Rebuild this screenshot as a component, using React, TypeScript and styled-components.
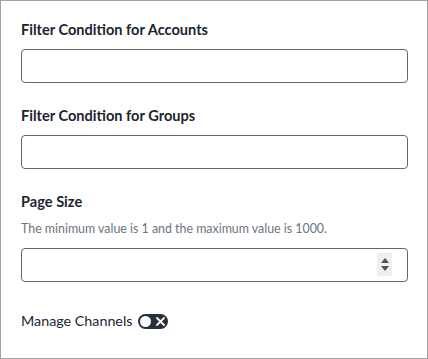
import React, { useState } from 'react';
import styled, { createGlobalStyle } from 'styled-components';

const GlobalStyle = createGlobalStyle`
  html, body {
    margin: 0;
    padding: 0;
    background: #ffffff;
  }
  * {
    box-sizing: border-box;
  }
`;

const Panel = styled.div`
  width: 428px;
  height: 359px;
  border: 1px solid #a3a3a3;
  padding: 19px 19px 0 20px;
  font-family: 'Lato', 'Liberation Sans', sans-serif;
  color: #1d2530;
  display: flex;
  flex-direction: column;
`;

const Field = styled.div`
  display: flex;
  flex-direction: column;
  margin-bottom: 23px;
`;

const Label = styled.label`
  font-size: 14.6px;
  font-weight: 700;
  line-height: 20px;
  margin-bottom: 9px;
`;

const Hint = styled.div`
  font-size: 12.4px;
  line-height: 16px;
  color: #6b7480;
  margin-top: 0;
  margin-bottom: 11px;
`;

const InputWrap = styled.div`
  position: relative;
`;

const TextInput = styled.input`
  width: 100%;
  height: 34px;
  border: 1px solid #5d6874;
  border-radius: 4px;
  padding: 0 10px;
  font-family: inherit;
  font-size: 14px;
  outline: none;
  background: #fff;
`;

const Spinner = styled.div`
  position: absolute;
  right: 16px;
  top: 5px;
  width: 15px;
  height: 23px;
  background: #efefef;
  display: flex;
  flex-direction: column;
  align-items: center;
  justify-content: center;
  gap: 3px;
`;

const Arrow = styled.div<{ down?: boolean }>`
  width: 0;
  height: 0;
  border-left: 4px solid transparent;
  border-right: 4px solid transparent;
  ${({ down }) =>
    down ? 'border-top: 5px solid #555;' : 'border-bottom: 5px solid #555;'}
`;

const ToggleRow = styled.div`
  display: flex;
  align-items: center;
  gap: 6px;
  font-size: 14.3px;
  line-height: 20px;
  margin-top: 6px;
`;

const Toggle = styled.button<{ on: boolean }>`
  width: 30px;
  height: 15px;
  border-radius: 8px;
  border: none;
  padding: 0 2px;
  background: #27303b;
  display: flex;
  align-items: center;
  justify-content: space-between;
  cursor: pointer;
`;

const Knob = styled.span`
  width: 11px;
  height: 11px;
  border-radius: 50%;
  background: #fff;
`;

const App: React.FC = () => {
  const [manage, setManage] = useState(false);

  return (
    <>
      <GlobalStyle />
      <Panel>
        <Field>
          <Label>Filter Condition for Accounts</Label>
          <TextInput type="text" />
        </Field>
        <Field>
          <Label>Filter Condition for Groups</Label>
          <TextInput type="text" />
        </Field>
        <Field>
          <Label>Page Size</Label>
          <Hint>The minimum value is 1 and the maximum value is 1000.</Hint>
          <InputWrap>
            <TextInput type="text" />
            <Spinner>
              <Arrow />
              <Arrow down />
            </Spinner>
          </InputWrap>
        </Field>
        <ToggleRow>
          Manage Channels
          <Toggle on={manage} onClick={() => setManage(!manage)}>
            <Knob />
            <svg width="11" height="11" viewBox="0 0 11 11">
              <path d="M2 2 L9 9 M9 2 L2 9" stroke="#fff" strokeWidth="1.8" strokeLinecap="round" />
            </svg>
          </Toggle>
        </ToggleRow>
      </Panel>
    </>
  );
};

export default App;
